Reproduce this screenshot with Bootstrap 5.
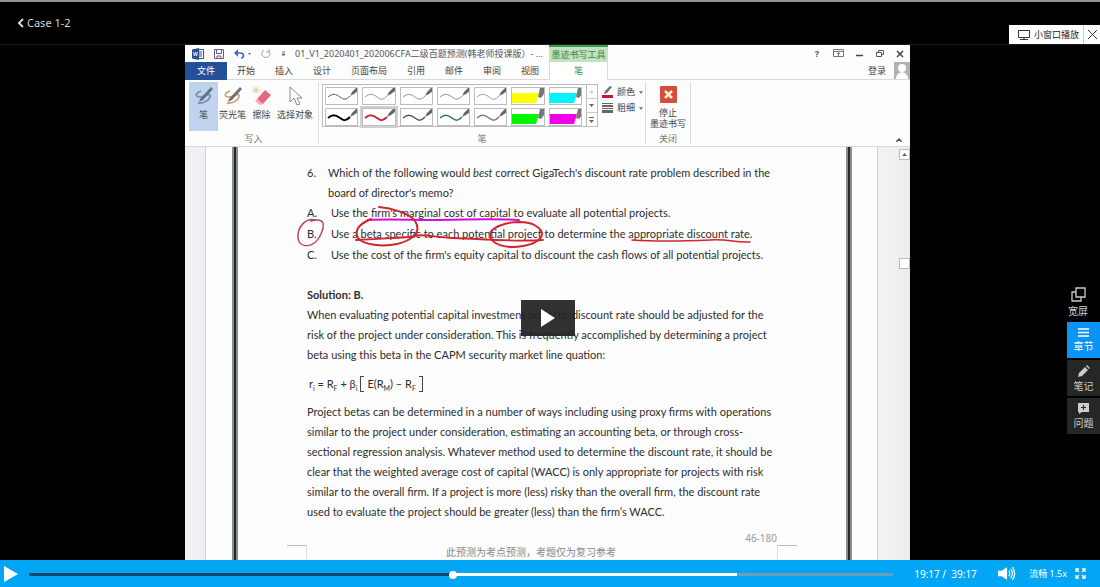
<!DOCTYPE html>
<html lang="zh-CN">
<head>
<meta charset="utf-8">
<meta name="viewport" content="width=device-width, initial-scale=1">
<title>Case 1-2</title>
<link href="https://cdn.jsdelivr.net/npm/bootstrap@5.3.0/dist/css/bootstrap.min.css" rel="stylesheet">
<style>
  body { background: #000; font-family: "Noto Sans", "Noto Sans CJK SC", sans-serif; font-size: 9px; line-height: 12px; }
  button { background: none; border: 0; padding: 0; color: inherit; }
  svg { display: block; flex: none; }
  .topbar { height: 45px; border-top: 2px solid #8d9599; border-bottom: 1px solid #1c1c1c; color: #d6d6d6; }
  .back-link { color: #d6d6d6; font-size: 11px; padding-left: 17px; gap: 3px; }
  .mini-window { background: #fff; color: #222; height: 19px; }
  .mini-window .open { padding: 0 4px 0 9px; gap: 4px; border-right: 1px solid #ccc; }
  .mini-window .shut { width: 16px; }
  .stage { display: grid; grid-template-columns: 185fr 725fr 190fr; }
  .video { background: #fdfdfd; color: #444; }

  .titlebar { height: 17px; }
  .quick { gap: 10px; padding-left: 7px; width: 110px; }
  .doc-title { color: #555; white-space: nowrap; }
  .win-controls { gap: 10px; padding-right: 5px; color: #555; }
  .tool-head { left: 364px; width: 59px; height: 17px; background: #c3e2bf; border-top: 2px solid #3b9b4d; color: #35893f; }
  .tabs { height: 18px; border-bottom: 1px solid #d8dae0; }
  .tabs button { height: 18px; padding: 0 10px; }
  .tabs .file-tab { background: #24509a; color: #fff; width: 42px; }
  .tabs .pen-tab { background: #fff; color: #35893f; width: 59px; border: 1px solid #d8dae0; border-top: 0; border-bottom-color: #fff; }
  .avatar { width: 16px; height: 17px; background: #b2b2b2; }
  .ribbon { height: 67px; border-bottom: 1px solid #d5d8dc; padding-top: 2px; }
  .grp { border-right: 1px solid #dcdcdc; height: 62px; }
  .grp-body { height: 50px; }
  .grp-name { color: #777; text-align: center; padding-top: 1px; }
  .tool { display: flex; flex-direction: column; align-items: center; gap: 3px; padding-top: 4px; height: 49px; width: 29px; white-space: nowrap; }
  .tool.active { background: #bfd2ee; }
  .gallery { display: grid; grid-template-columns: repeat(7, 1fr) 11px; column-gap: 4px; row-gap: 3px; border: 1px solid #bbb; padding: 2px 0 0 2px; height: 43px; width: 276px; margin: 2px 0 0 3px; background: #fff; }
  .gallery .pen { height: 18px; border: 1px solid #bdbdbd; overflow: hidden; }
  .gallery .chosen { outline: 2px solid #d0d0d0; }
  .gallery .scroller { grid-column: 8; grid-row: 1 / 3; border-left: 1px solid #bbb; margin-top: -2px; height: 41px; }
  .scroller button { height: 14px; width: 10px; display: flex; align-items: center; justify-content: center; border-bottom: 1px solid #ccc; }
  .scroller button:last-child { border: 0; }
  .stop-label { line-height: 11px; }

  .ruler { width: 21px; margin-right: 26px; background: #f0f0f4; border-right: 1px solid #cfcfd6; }
  .gutter { width: 33px; margin-left: 25px; background: linear-gradient(90deg, #f3f3f3, #ececec); border-left: 1px solid #d4d4d4; }
  .scroll-end { width: 11px; height: 11px; border: 1px solid #bbb; background: #fff; }
  .edge { width: 6px; background: linear-gradient(90deg, #87908f 0 2px, #25292e 2px 4px, #8a8f92 4px); }
  .sheet { padding: 16px 0 0 69px; font: 11px/20px Lato, "Noto Sans CJK SC", sans-serif; color: #2d2d2d; white-space: nowrap; }
  .question { display: grid; grid-template-columns: 21px 1fr; }
  .choices { display: grid; gap: 1px 0; grid-template-columns: 24px 1fr; margin-bottom: 20px; }
  .formula { height: 37px; gap: 3px; padding: 0 0 0 2px; }
  .formula sub { font-size: 7px; bottom: -3px; }
  .bracket { border: 1px solid #444; height: 16px; width: 4px; }
  .page-no { color: #999; font: 10px/14px "Noto Sans", sans-serif; padding-right: 69px; margin-top: 9px; }
  .corner { width: 20px; height: 15px; border-top: 1px solid #bbb; }
  .sheet-foot { margin-left: -20px; padding-right: 49px; color: #888; font-size: 10px; line-height: 15px; }
  .sheet-foot .notice { margin-right: 22px; }
  .ink { left: 0; top: 0; pointer-events: none; }
  .big-play { left: 50%; top: 53%; transform: translate(-50%, -50%); width: 54px; height: 36px; background: rgba(33, 33, 33, .93); }

  .side { padding-top: 239px; gap: 2px; color: #ccc; font-size: 10px; }
  .side button { width: 33px; height: 36px; background: #262626; display: flex; flex-direction: column; align-items: center; justify-content: center; gap: 3px; }
  .side .wide { background: none; width: 44px; }
  .side .current { background: #0b93f6; color: #fff; }
  .player { height: 27px; background: #03a5f5; color: #fff; font-size: 10px; }
  .player .clock { width: 105px; padding-left: 21px; }
  .player .speed { font-size: 9px; }
  .player .full { margin: 0 14px 0 8px; }
  .seek { appearance: none; height: 3px; margin: 2px 0 0; border-radius: 2px; background: linear-gradient(90deg, #13466a 49%, #fff 49% 82%, #6d9dbb 82%); }
  .seek::-webkit-slider-thumb { appearance: none; width: 8px; height: 8px; border-radius: 50%; background: #fff; }
</style>
</head>
<body class="d-flex flex-column min-vh-100">
<svg width="0" height="0" class="position-absolute">
  <symbol id="stroke" viewBox="0 0 32 16">
    <path d="M2 9C7 5 10 6 14 9S20 12 24 8" fill="none" stroke="currentColor"/>
    <path d="M24 8l2-4 4-4h2v3l-4 3z" fill="#666" stroke="none"/>
  </symbol>
  <symbol id="marker" viewBox="0 0 32 16">
    <path d="M0 5h27l-3 10H0z" fill="currentColor"/><path d="M24 15l3-4h4l-1 4z" fill="#fff"/><path d="M26 9l2-9h4v6l-3 4z" fill="#777"/>
  </symbol>
  <symbol id="pen" viewBox="0 0 20 20">
    <path d="M7 5C1 7 1 11 6 11S16 6 16 10 9 18 4 17" fill="none" stroke="currentColor" stroke-width="1.7"/>
    <path d="M6 13L17 1l2 2L9 14l-4 2z" fill="#65707e"/>
  </symbol>
  <symbol id="down" viewBox="0 0 5 3"><path d="M0 0h5L2.500 3z" fill="#666"/></symbol>
</svg>

<header class="topbar d-flex justify-content-between">
  <a href="#" class="back-link d-flex align-items-center text-decoration-none"><svg width="7" height="10" viewBox="0 0 7 10"><path d="M6 1L2 5l4 4" fill="none" stroke="currentColor" stroke-width="2"/></svg>Case 1-2</a>
  <div class="mini-window d-flex align-self-end">
    <button class="open d-flex align-items-center"><svg width="12" height="12" viewBox="0 0 12 12" fill="none" stroke="#333"><path d="M.5 1.500h11v7H.5zM6 8.500v2M2 10.500h8"/></svg>小窗口播放</button>
    <button class="shut d-flex align-items-center justify-content-center" aria-label="关闭"><svg width="11" height="11" viewBox="0 0 11 11" stroke="#333"><path d="M1 1l9 9M10 1l-9 9"/></svg></button>
  </div>
</header>

<main class="stage flex-grow-1">
  <div></div>
  <section class="video position-relative d-flex flex-column">
    <div class="titlebar d-flex">
      <div class="quick d-flex align-items-center">
        <svg width="12" height="12" viewBox="0 0 12 12"><path d="M5 1.500h6.500v9H5" fill="#fff" stroke="#2b4f91"/><path d="M7 4h3M7 6h3M7 8h3" stroke="#2b4f91"/><path d="M0 1.500L7 0v12L0 10.500z" fill="#2b4f91"/><path d="M1.500 4l1 4 1-4 1 4 1-4" stroke="#fff" fill="none" stroke-width=".8"/></svg>
        <svg width="10" height="10" viewBox="0 0 10 10" fill="none" stroke="#6d5590"><path d="M.5.500h9v9h-9zM2.500.500v4h5v-4M3 9V7h4v2"/></svg>
        <svg width="17" height="10" viewBox="0 0 17 10"><path d="M1 4h5c5 0 4 5 1 5" fill="none" stroke="#3971b5" stroke-width="1.500"/><path d="M0 4l4-4v8z" fill="#3971b5"/><path d="M14 4h3l-1.500 2z" fill="#666"/></svg>
        <svg width="10" height="10" viewBox="0 0 10 10"><path d="M3 1a4 4 0 1 0 5 1M8 0v3H5" fill="none" stroke="#94a1b5"/></svg>
        <svg width="5" height="6" viewBox="0 0 5 6"><path d="M1 1h3M1 3l1.500 2L4 3z" stroke="#777" fill="#777"/></svg>
      </div>
      <div class="doc-title align-self-center">01_V1_2020401_202006CFA二级百题预测(韩老师授课版）- ...</div>
      <div class="tool-head position-absolute d-flex align-items-center justify-content-center text-nowrap">墨迹书写工具</div>
      <div class="win-controls d-flex align-items-center ms-auto">
        <button class="fw-bold px-1" aria-label="帮助">?</button>
        <button aria-label="功能区显示选项"><svg width="11" height="9" viewBox="0 0 11 9" fill="none" stroke="#777"><path d="M.5.500h10v7H.5zM.500 2.500h10M5.500 7V4M4 5l1.500-1.500L7 5"/></svg></button>
        <button aria-label="最小化"><svg width="11" height="8" viewBox="0 0 11 8"><path d="M2 5.500h7" stroke="#444" stroke-width="1.500"/></svg></button>
        <button aria-label="还原"><svg width="10" height="8" viewBox="0 0 10 8" fill="none" stroke="#555"><path d="M3.500 2.500v-2h5v4h-2M1.500 2.500h5v4h-5z"/></svg></button>
        <button aria-label="关闭"><svg width="10" height="8" viewBox="0 0 10 8" stroke="#444" stroke-width="1.500"><path d="M2 1l6 6M8 1L2 7"/></svg></button>
      </div>
    </div>
    <nav class="tabs d-flex">
      <button class="file-tab">文件</button><button>开始</button><button>插入</button><button>设计</button><button>页面布局</button><button>引用</button><button>邮件</button><button>审阅</button><button>视图</button><button class="pen-tab">笔</button>
      <button class="ms-auto px-1 me-1">登录</button>
      <svg class="avatar" viewBox="0 0 16 17"><circle cx="8" cy="6" r="4" fill="#fff"/><path d="M2 17c0-9 12-9 12 0z" fill="#fff"/></svg>
    </nav>
    <div class="ribbon d-flex">
      <div class="grp ps-1" style="width:134px">
        <div class="grp-body d-flex">
          <button class="tool active"><svg width="20" height="20" color="#7187ab"><use href="#pen"/></svg>笔</button>
          <button class="tool"><svg width="20" height="20" color="#d39a6b"><use href="#pen"/></svg>荧光笔</button>
          <button class="tool"><svg width="20" height="20" viewBox="0 0 20 20"><path d="M5 13l8-9 6 5-8 9z" fill="#e3677f"/><path d="M5 13l6 5-3 1-5-4z" fill="#f4a7b5"/><path d="M4 0v8M0 4h8M1 1l6 6M7 1L1 7" stroke="#dac87c" stroke-width=".8"/></svg>擦除</button>
          <button class="tool" style="width:38px"><svg width="20" height="20" viewBox="0 0 20 20"><path d="M5 1v15l4-4 3 7 3-1-3-6h5z" fill="#fff" stroke="#888"/></svg>选择对象</button>
        </div>
        <div class="grp-name">写入</div>
      </div>
      <div class="grp" style="width:327px">
        <div class="grp-body d-flex">
          <div class="gallery">
            <button class="pen" aria-label="笔 1"><svg width="32" height="16" color="#555"><use href="#stroke"/></svg></button>
            <button class="pen" aria-label="笔 2"><svg width="32" height="16" color="#c88591"><use href="#stroke"/></svg></button>
            <button class="pen" aria-label="笔 3"><svg width="32" height="16" color="#8998a4"><use href="#stroke"/></svg></button>
            <button class="pen" aria-label="笔 4"><svg width="32" height="16" color="#82968c"><use href="#stroke"/></svg></button>
            <button class="pen" aria-label="笔 5"><svg width="32" height="16" color="#a0a0a0"><use href="#stroke"/></svg></button>
            <button class="pen" aria-label="荧光笔 1"><svg width="32" height="16" color="#ff0"><use href="#marker"/></svg></button>
            <button class="pen" aria-label="荧光笔 2"><svg width="32" height="16" color="#00f4f8"><use href="#marker"/></svg></button>
            <button class="pen" aria-label="笔 6"><svg width="32" height="16" color="#000" stroke-width="2"><use href="#stroke"/></svg></button>
            <button class="pen chosen" aria-label="笔 7"><svg width="32" height="16" color="#c52931" stroke-width="2"><use href="#stroke"/></svg></button>
            <button class="pen" aria-label="笔 8"><svg width="32" height="16" color="#42546b" stroke-width="1.500"><use href="#stroke"/></svg></button>
            <button class="pen" aria-label="笔 9"><svg width="32" height="16" color="#26763e" stroke-width="1.500"><use href="#stroke"/></svg></button>
            <button class="pen" aria-label="笔 10"><svg width="32" height="16" color="#777" stroke-width="1.500"><use href="#stroke"/></svg></button>
            <button class="pen" aria-label="荧光笔 3"><svg width="32" height="16" color="#00f500"><use href="#marker"/></svg></button>
            <button class="pen" aria-label="荧光笔 4"><svg width="32" height="16" color="#ee00e8"><use href="#marker"/></svg></button>
            <div class="scroller">
              <button aria-label="上移"><svg width="5" height="3" viewBox="0 0 5 3"><path d="M0 3l2.500-3L5 3z" fill="#ccc"/></svg></button>
              <button aria-label="下移"><svg width="5" height="3"><use href="#down"/></svg></button>
              <button aria-label="更多"><svg width="5" height="6" viewBox="0 0 5 6"><path d="M0 0h5v1H0zM0 3h5L2.500 6z" fill="#666"/></svg></button>
            </div>
          </div>
          <div class="d-flex flex-column gap-1 ps-1 pt-1 text-nowrap">
            <button class="d-flex align-items-center gap-1"><svg width="11" height="12" viewBox="0 0 11 12"><path d="M0 9h11v3H0z" fill="#c8182e"/><path d="M2 8l1-3 5-5 2 1-5 6z" fill="#63758e"/></svg>颜色<svg width="4" height="3"><use href="#down"/></svg></button>
            <button class="d-flex align-items-center gap-1"><svg width="11" height="10" viewBox="0 0 11 10"><path d="M0 0h11v1H0zM0 2h11v2H0zM0 5h11v1H0zM0 7h11v3H0z" fill="#666"/></svg>粗细<svg width="4" height="3"><use href="#down"/></svg></button>
          </div>
        </div>
        <div class="grp-name">笔</div>
      </div>
      <div class="grp" style="width:45px">
        <button class="grp-body w-100 d-flex flex-column align-items-center text-nowrap pt-1">
          <svg class="mb-1" width="17" height="17" viewBox="0 0 17 17"><rect width="17" height="17" rx="1" fill="#d34c3c"/><path d="M5 5l7 7M12 5l-7 7" stroke="#ffefc8" stroke-width="2.500"/></svg>
          <span class="stop-label">停止<br>墨迹书写</span>
        </button>
        <div class="grp-name">关闭</div>
      </div>
      <button class="ms-auto align-self-end p-1 me-1" aria-label="折叠功能区"><svg width="6" height="4" viewBox="0 0 6 4"><path d="M0 4l3-3 3 3" fill="none" stroke="#555" stroke-width="1.500"/></svg></button>
    </div>

    <div class="d-flex flex-grow-1 position-relative">
      <div class="ruler"></div>
      <div class="edge"></div>
      <article class="sheet flex-grow-1">
        <div class="question"><span>6.</span><span>Which of the following would <em>best</em> correct GigaTech's discount rate problem described in the<br>board of director's memo?</span></div>
        <div class="choices"><span>A.</span><span>Use the firm's marginal cost of capital to evaluate all potential projects.</span>
          <span>B.</span><span>Use a beta specific to each potential project to determine the appropriate discount rate.</span>
          <span>C.</span><span>Use the cost of the firm's equity capital to discount the cash flows of all potential projects.</span></div>
        <strong class="d-block">Solution: B.</strong>
        <p class="m-0">When evaluating potential capital investment projects, discount rate should be adjusted for the<br>risk of the project under consideration. This is frequently accomplished by determining a project<br>beta using this beta in the CAPM security market line quation:</p>
        <div class="formula d-flex align-items-center"><span>r<sub>i</sub> = R<sub>F</sub> + β<sub>i</sub></span><span class="bracket border-end-0"></span><span>E(R<sub>M</sub>) – R<sub>F</sub></span><span class="bracket border-start-0"></span></div>
        <p class="m-0">Project betas can be determined in a number of ways including using proxy firms with operations<br>similar to the project under consideration, estimating an accounting beta, or through cross-<br>sectional regression analysis. Whatever method used to determine the discount rate, it should be<br>clear that the weighted average cost of capital (WACC) is only appropriate for projects with risk<br>similar to the overall firm. If a project is more (less) risky than the overall firm, the discount rate<br>used to evaluate the project should be greater (less) than the firm’s WACC.</p>
        <div class="page-no text-end">46-180</div>
        <div class="sheet-foot d-flex justify-content-between"><span class="corner border-end"></span><span class="notice">此预测为考点预测，考题仅为复习参考</span><span class="corner border-start"></span></div>
      </article>
      <div class="edge"></div>
      <div class="gutter d-flex flex-column align-items-end">
        <button class="scroll-end d-flex align-items-center justify-content-center" style="margin-top:2px" aria-label="向上滚动"><svg width="5" height="3" viewBox="0 0 5 3"><path d="M0 3l2.500-3L5 3z" fill="#666"/></svg></button>
        <span class="scroll-end" style="margin-top:98px"></span>
      </div>
      <svg class="ink position-absolute" width="725" height="413" viewBox="185 147 725 413" fill="none" stroke="#d3232f" stroke-width="2" stroke-linecap="round">
        <path d="M316 220C305 217 297 228 298 238C299 249 314 248 320 236C325 226 326 217 311 221" stroke="#bd4760" stroke-width="1.500"/>
        <path d="M368 220C388 219 410 220 431 220C465 220 487 218 519 220" stroke="#d80bdb"/>
        <path d="M379 207C391 208 409 213 415 221C423 233 410 241 397 244C383 247 363 245 358 238C354 230 359 224 371 219"/>
        <path d="M356 240C389 238 397 238 410 237C421 233 431 237 453 238C485 239 512 242 543 240" stroke-width="1.800"/>
        <path d="M520 222C502 222 490 229 490 235C491 245 507 249 523 246C541 243 548 233 536 226C527 220 507 222 502 225"/>
        <path d="M632 240C662 242 687 241 710 240C730 239 735 243 750 242" stroke-width="1.500"/>
      </svg>
    </div>
    <button class="big-play position-absolute d-flex align-items-center justify-content-center" aria-label="播放"><svg width="14" height="18" viewBox="0 0 14 18"><path d="M0 0l14 9-14 9z" fill="#fff"/></svg></button>
  </section>

  <aside class="side d-flex flex-column align-items-end">
    <button class="wide"><svg width="15" height="15" viewBox="0 0 15 15" fill="none" stroke="currentColor" stroke-width="1.300"><path d="M5 1h9v9H5zM5 5H1v9h9v-4"/></svg>宽屏</button>
    <button class="current"><svg width="11" height="9" viewBox="0 0 11 9"><path d="M0 1h11M0 4.500h11M0 8h11" stroke="#fff" stroke-width="1.500"/></svg>章节</button>
    <button><svg width="12" height="12" viewBox="0 0 12 12" fill="currentColor"><path d="M0 12l1-4 6-6 3 3-6 6zM8 1l1-1 3 3-1 1z"/></svg>笔记</button>
    <button><svg width="11" height="11" viewBox="0 0 11 11"><path d="M0 0h11v9H4l-3 2V9H0z" fill="currentColor"/><path d="M5.500 2v5M3 4.500h5" stroke="#262626"/></svg>问题</button>
  </aside>
</main>

<footer class="player d-flex align-items-center">
  <button class="ms-1 me-2" aria-label="播放"><svg width="17" height="16" viewBox="0 0 17 16"><path d="M0 0l14 8-14 8z" fill="#fff"/></svg></button>
  <input class="seek flex-grow-1" type="range" min="0" max="2357" value="1157" aria-label="播放进度">
  <span class="clock text-nowrap">19:17 / &nbsp;39:17</span>
  <button class="me-2" aria-label="音量"><svg width="19" height="13" viewBox="0 0 21 14"><path d="M0 4h4l6-4v14l-6-4H0z" fill="#fff"/><path d="M12 4q2 3 0 6M14 2q4 5 0 10M16 0q5 7 0 14" fill="none" stroke="#fff" stroke-width="1.300"/></svg></button>
  <button class="speed ms-1 text-nowrap">流畅 1.5x</button>
  <button class="full" aria-label="全屏"><svg width="11" height="11" viewBox="0 0 11 11" fill="none" stroke="#fff" stroke-width="1.300"><path d="M1 4V1h3M7 1h3v3M10 7v3H7M4 10H1V7M1 1l3 3M10 1L7 4M10 10L7 7M1 10l3-3"/></svg></button>
</footer>
<script src="https://cdn.jsdelivr.net/npm/bootstrap@5.3.0/dist/js/bootstrap.bundle.min.js"></script>
</body>
</html>
